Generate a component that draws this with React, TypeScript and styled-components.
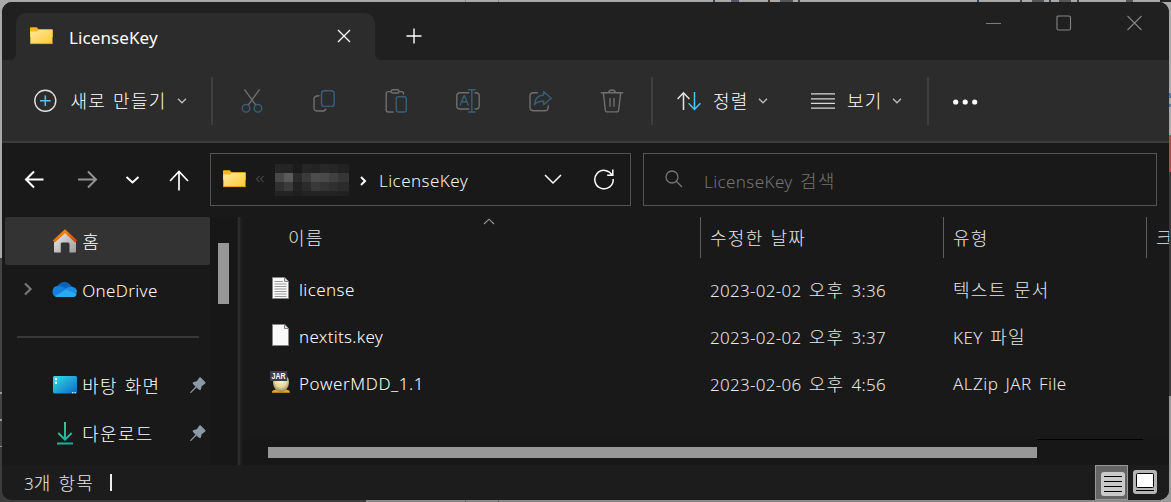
import React from "react";
import styled, { createGlobalStyle } from "styled-components";

const Global = createGlobalStyle`
  * { box-sizing: border-box; }
  body { margin: 0; background: #8a8a8a; overflow: hidden; }
`;

const Desktop = styled.div`
  width: 1171px;
  height: 502px;
  padding: 2px;
  font-family: "Noto Sans", "Noto Sans CJK KR", sans-serif;
  font-size: 17px;
  line-height: 24px;
  color: #fff;
  background:
    linear-gradient(90deg, transparent 75px, #888 75px 76px, transparent 76px 108px, #888 108px 109px, transparent 109px) 390px 0 / 200px 2px no-repeat,
    linear-gradient(90deg, #345 0 2px, transparent 2px 18px, #556 18px 26px, transparent 26px 55px, #432 55px 57px, transparent 57px) 713px 0 / 70px 2px no-repeat,
    linear-gradient(90deg, #555 0 13px, transparent 13px 18px, #345 18px 20px, transparent 20px 197px, #345 197px 199px, transparent 199px 240px, #345 240px 242px, transparent 242px 252px, #555 252px 264px, transparent 264px 269px, #345 269px 271px, transparent 271px 279px, #555 279px 291px, transparent 291px 297px, #345 297px 299px, transparent 299px 346px, #555 346px 353px, transparent 353px 380px, #222 380px 391px) 780px 0 / 391px 2px no-repeat,
    linear-gradient(#a9a9a9, #a9a9a9) 0 0 / 100% 2px no-repeat,
    linear-gradient(#a9a9a9 0 258px, #444 258px 392px, #999 392px 394px, #444 394px 419px, #999 419px 421px, #444 421px 446px, #999 446px 447px, #3c3c3c 447px) 0 0 / 10px 100% no-repeat,
    linear-gradient(#aaa 0 93px, #56789a 93px 98px, #aaa 98px 104px, #56789a 104px 107px, #aaa 107px 135px, #b44a4a 135px 172px, #3a3a3a 172px 396px, #999 396px) 1161px 0 / 10px 100% no-repeat,
    linear-gradient(90deg, #3c3c3c 0 366px, #888 366px 465px, #666 465px 466px, #888 466px 498px, #666 498px 499px, #888 499px) 0 492px / 100% 10px no-repeat;
`;

const Window = styled.div`
  width: 1167px;
  height: 498px;
  border-radius: 10px;
  overflow: hidden;
  background: #191919;
  display: flex;
  flex-direction: column;
`;

const Hangul = styled.span`
  font-family: "Noto Sans CJK KR", sans-serif;
  font-size: 18px;
  font-weight: 300;
  letter-spacing: 1.3px;
`;

const TextLine = styled.span<{ $color?: string; $track?: number; $shift?: number; $weight?: number }>`
  color: ${(p) => p.$color ?? "#fff"};
  font-weight: ${(p) => p.$weight ?? 300};
  letter-spacing: ${(p) => p.$track ?? 0}px;
  word-spacing: 2.4px;
  margin-top: ${(p) => p.$shift ?? 0}px;
  white-space: pre;
  flex: none;
`;

function Label({ text, color, track, shift, weight }: {
  text: string; color?: string; track?: number; shift?: number; weight?: number;
}) {
  return (
    <TextLine $color={color} $track={track} $shift={shift} $weight={weight}>
      {text.split(/([가-힣]+)/).map((part, i) => (i % 2 ? <Hangul key={i}>{part}</Hangul> : part))}
    </TextLine>
  );
}

/* ---------- title bar ---------- */

const TitleBar = styled.div`
  height: 58px;
  flex: none;
  background: #202020;
  display: flex;
  align-items: flex-end;
  padding-left: 14px;
`;

const Tab = styled.div`
  width: 359px;
  height: 47px;
  border-radius: 10px 10px 0 0;
  background: #2c2c2c;
  display: flex;
  align-items: center;
  padding: 0 24px 2px 14px;
  position: relative;
  &::before, &::after {
    content: "";
    position: absolute;
    bottom: 0;
    width: 5px;
    height: 5px;
  }
  &::before { left: -5px; background: radial-gradient(circle at 0 0, transparent 4.5px, #2c2c2c 5px); }
  &::after { right: -5px; background: radial-gradient(circle at 100% 0, transparent 4.5px, #2c2c2c 5px); }
`;

const TabTitle = styled.div`
  flex: 1;
  margin: 5px 0 0 16px;
  display: flex;
`;

const NewTab = styled.div`
  width: 78px;
  height: 48px;
  display: flex;
  align-items: center;
  justify-content: center;
`;

const WindowControls = styled.div`
  margin-left: auto;
  align-self: flex-start;
  display: flex;
  height: 41px;
  align-items: center;
  gap: 55px;
  padding-right: 27px;
`;

/* ---------- command bar ---------- */

const CommandBar = styled.div`
  height: 83px;
  flex: none;
  background: #2c2c2c;
  border-bottom: 2px solid #3b3b3b;
  display: flex;
  align-items: center;
`;

const Command = styled.div<{ $width: number; $pad: number; $gap: number }>`
  width: ${(p) => p.$width}px;
  padding-left: ${(p) => p.$pad}px;
  display: flex;
  align-items: center;
  flex: none;
  gap: ${(p) => p.$gap}px;
`;

const ToolIcons = styled.div`
  display: flex;
  width: 438px;
  padding-left: 27px;
  gap: 48px;
`;

const Separator = styled.div`
  width: 2px;
  height: 48px;
  flex: none;
  background: #3e3e3e;
`;

const ChevronBox = styled.div`
  margin: 1px 0 0 -3px;
  display: flex;
`;

/* ---------- navigation row ---------- */

const NavBar = styled.div`
  height: 74px;
  flex: none;
  display: flex;
  align-items: center;
  padding-bottom: 1px;
`;

const NavButtons = styled.div`
  width: 208px;
  padding: 1px 0 0 22px;
  display: grid;
  grid-template-columns: 54px 44px 47px 20px;
  align-items: center;
`;

const AddressBox = styled.div`
  width: 421px;
  height: 53px;
  border: 1px solid #535353;
  display: flex;
  align-items: center;
  padding: 0 16px 0 12px;
`;

const FolderBox = styled.div`
  display: flex;
  margin-top: -2px;
`;

const Mosaic = styled.div`
  display: grid;
  grid-template-columns: 9px 9px 9px 9px 9px 9px 9px 11px;
  grid-template-rows: 9px 9px 9px 5px;
  margin: 0 10.5px 0 10px;
`;

const MosaicCell = styled.i<{ $shade: string }>`
  background: ${(p) => p.$shade};
`;

const PathEnd = styled.div`
  flex: 1;
  display: flex;
  padding-left: 12.5px;
`;

const SearchBox = styled.div`
  width: 514px;
  height: 53px;
  margin-left: 12px;
  border: 1px solid #535353;
  display: flex;
  align-items: center;
  padding-left: 21px;
  gap: 21px;
`;

/* ---------- body ---------- */

const Body = styled.div`
  height: 248px;
  flex: none;
  display: flex;
`;

const Sidebar = styled.div`
  width: 208px;
  padding-left: 3px;
  flex: none;
`;

const SideItem = styled.div<{ $active?: boolean }>`
  height: 48px;
  background: ${(p) => (p.$active ? "#333" : "transparent")};
  border-radius: 2px;
  display: grid;
  grid-template-columns: 47px 26px 1fr 18px;
  align-items: center;
  padding-right: 2px;
`;

const SideChevron = styled.div`
  padding-left: 17px;
  display: flex;
`;

const SideLabel = styled.div`
  display: flex;
  padding: 1px 0 0 4.2px;
`;

const SideRule = styled.div`
  height: 48px;
  padding: 23px 11px 0 12px;
  &::after {
    content: "";
    display: block;
    height: 2px;
    background: #383838;
  }
`;

const SideScroll = styled.div`
  width: 27px;
  flex: none;
  background: #171717;
  padding: 26px 0 0 8px;
`;

const SideThumb = styled.div`
  width: 11px;
  height: 61px;
  background: #979797;
`;

const Splitter = styled.div`
  width: 5px;
  flex: none;
  border-left: 1px solid #1d1d1d;
  border-right: 2px solid #202020;
  background: #2c2c2c;
`;

const Files = styled.div`
  flex: 1;
  min-width: 0;
  display: flex;
  flex-direction: column;
  overflow: hidden;
`;

const columns = "459px 243px 203px 30px";

const HeaderRow = styled.div`
  height: 49px;
  display: grid;
  grid-template-columns: ${columns};
  flex: none;
`;

const HeaderCell = styled.div<{ $pad?: number }>`
  height: 41px;
  padding: 1px 0 0 ${(p) => p.$pad ?? 9}px;
  border-right: 1px solid #5f5f5f;
  display: flex;
  align-items: center;
  position: relative;
  &:last-child { border-right: none; }
`;

const SortMark = styled.div`
  position: absolute;
  left: 241px;
  top: 1px;
  display: flex;
`;

const FileRow = styled.div`
  height: 47px;
  flex: none;
  display: grid;
  grid-template-columns: ${columns};
  align-items: center;
`;

const FileCell = styled.div<{ $pad?: number }>`
  height: 28px;
  padding-left: ${(p) => p.$pad ?? 9}px;
  display: flex;
  align-items: center;
`;

const FileIcon = styled.div`
  width: 29px;
  display: flex;
  margin-top: -3px;
`;

const HScroll = styled.div`
  margin-top: auto;
  height: 26px;
  flex: none;
  background: #171717;
  display: flex;
  padding-left: 26px;
`;

const HThumb = styled.div`
  margin-top: 8px;
  width: 769px;
  height: 11px;
  background: #979797;
`;

const HRemainder = styled.div`
  width: 106px;
  height: 1px;
  background: #000;
`;

/* ---------- status bar ---------- */

const StatusBar = styled.div`
  height: 35px;
  flex: none;
  background: #1c1c1c;
  display: flex;
  align-items: center;
  padding-left: 22px;
`;

const Caret = styled.div`
  width: 2px;
  height: 17px;
  margin-left: 16px;
  background: #eee;
`;

const ViewToggle = styled.div<{ $active?: boolean }>`
  width: ${(p) => (p.$active ? 33 : 41)}px;
  height: 35px;
  padding: ${(p) => (p.$active ? "6px 0 0 5px" : "5px 0 0 5px")};
  ${(p) => (p.$active ? "margin-left: auto; background: #656565; border: 1px solid #979797;" : "")}
`;

/* ---------- icons ---------- */

function FolderIcon({ id }: { id: string }) {
  return (
    <svg width="23" height="18" viewBox="0 0 23 18">
      <defs>
        <linearGradient id={id} x1="0" y1="0" x2="1" y2="1">
          <stop offset="0" stopColor="#ffe9a0" />
          <stop offset="1" stopColor="#ffc933" />
        </linearGradient>
      </defs>
      <path d="M0 1.2Q0 .3 1 .3H6.6L8.6 2.2H22Q22.7 2.2 22.7 3V10H0Z" fill="#fcb615" />
      <path d="M.3 4.5H7L8.6 2.8H22.5V16.8H.3Z" fill={`url(#${id})`} />
      <path d="M.2 16.6H22.7" stroke="#e8a418" strokeWidth=".9" />
    </svg>
  );
}

function Stroke({ w, h, d, color = "#fff", sw = 1.3 }: {
  w: number; h: number; d: string; color?: string; sw?: number;
}) {
  return (
    <svg width={w} height={h} viewBox={`0 0 ${w} ${h}`} fill="none" stroke={color} strokeWidth={sw}>
      <path d={d} />
    </svg>
  );
}

const GRAY = "#6f6f6f";
const BLUE = "#366079";

function ToolIcon({ gray, blue }: { gray: string; blue: string }) {
  return (
    <svg width="24" height="24" viewBox="0 0 24 24" fill="none" strokeWidth="1.4" strokeLinecap="round" strokeLinejoin="round">
      <path d={gray} stroke={GRAY} />
      <path d={blue} stroke={BLUE} />
    </svg>
  );
}

const tools = [
  {
    gray: "M4.8 .8L15.6 15.8M19.2 .8L8.4 15.8",
    blue: "M9.8 19.3A3.8 3.8 0 1 1 2.2 19.3A3.8 3.8 0 1 1 9.8 19.3M21.8 19.3A3.8 3.8 0 1 1 14.2 19.3A3.8 3.8 0 1 1 21.8 19.3",
  },
  {
    gray: "M7 6.8C3.8 6.8 2 7.5 2 10V18.7C2 20.8 3.2 22 5.4 22H9.5C12 22 13.4 21.6 13.8 20.2",
    blue: "M12.5 1.8H19.2Q22.2 1.8 22.2 4.8V14.4Q22.2 17.4 19.2 17.4H12.5Q9.5 17.4 9.5 14.4V4.8Q9.5 1.8 12.5 1.8Z",
  },
  {
    gray: "M7 2.6H4.2Q2.2 2.6 2.2 4.6V21Q2.2 23 4.2 23H9M8.8 .8H13.4Q15 .8 15 2.4T13.4 4H8.8Q7.2 4 7.2 2.4T8.8 .8ZM15.2 2.6H17.6Q19.6 2.6 19.6 5",
    blue: "M14.2 7.8H20.4Q22.3 7.8 22.3 9.7V21.1Q22.3 23 20.4 23H14.2Q12.3 23 12.3 21.1V9.7Q12.3 7.8 14.2 7.8Z",
  },
  {
    gray: "M12.8 3.7H4Q.8 3.7 .8 6.9V16.8Q.8 20 4 20H12.8M19 3.7H20Q23.2 3.7 23.2 6.9V16.8Q23.2 20 20 20H19",
    blue: "M12.6 .8H19M12.6 23H19M15.8 .8V23M4.2 16L8 6.8H8.5L12.3 16M5.6 12.7H10.9",
  },
  {
    gray: "M9.5 3.7H5.5Q2 3.7 2 6.9V18.6Q2 21.8 5.5 21.8H16.5Q20.2 21.8 20.2 18.2V16.8",
    blue: "M15.6 2.5L23.2 9.2L15.6 15.8V12.2C11 12 8.2 13.2 6.4 15.8C6.8 10 9.8 6.4 15.6 6Z",
  },
  {
    gray: "M1.2 3.8H22.8M8.8 3.5C9 .2 15 .2 15.2 3.5M3.4 4L5.3 20.8Q5.6 22.9 7.6 22.9H16.4Q18.4 22.9 18.7 20.8L20.6 4M10 9.5V17.2M14 9.5V17.2",
    blue: "",
  },
];

const Chevron = () => (
  <ChevronBox>
    <Stroke w={10} h={8} d="M1 1.8L5 5.8L9 1.8" color="#b9b9b9" sw={1.4} />
  </ChevronBox>
);

function HomeIcon() {
  return (
    <svg width="26" height="26" viewBox="0 0 26 26">
      <defs>
        <linearGradient id="wall" x1="0" y1="0" x2="1" y2="1">
          <stop offset="0" stopColor="#ececec" />
          <stop offset="1" stopColor="#9d9d9d" />
        </linearGradient>
        <linearGradient id="roof" x1="0" y1="0" x2="1" y2="1">
          <stop offset="0" stopColor="#fb9a0c" />
          <stop offset="1" stopColor="#d63f05" />
        </linearGradient>
      </defs>
      <path d="M2 12L13 3L24 12V23.5Q24 24.5 23 24.5H17.5V16Q17.5 14.5 16 14.5H10Q8.8 14.5 8.8 16V24.5H3Q2 24.5 2 23.5Z" fill="url(#wall)" />
      <path d="M1.8 13.5L13 3.2L24.2 13.5" fill="none" stroke="url(#roof)" strokeWidth="3" />
    </svg>
  );
}

function CloudIcon() {
  return (
    <svg width="26" height="18" viewBox="0 0 26 18">
      <path d="M5 7C7 1.5 16 -1 20 7L12 13Z" fill="#0a63b8" />
      <path d="M3.8 6.2C7 5 10 6 12.5 8L20 12L5 17C-1 16.8 -.5 7.5 3.8 6.2Z" fill="#1480dc" />
      <path d="M13 9C17 5.5 24.5 5.8 25 11.5L24 14L12 13Z" fill="#1b8fe5" />
      <path d="M3 16L14 9.6L24.7 14C24 16.5 22.5 17 20.5 17H5.5Q4 17 3 16Z" fill="#29a9ee" />
    </svg>
  );
}

function DesktopIcon() {
  return (
    <svg width="26" height="20" viewBox="0 0 26 20">
      <defs>
        <linearGradient id="desk" x1="0" y1="0" x2="1" y2="1">
          <stop offset="0" stopColor="#35dfe8" />
          <stop offset="1" stopColor="#0c68c4" />
        </linearGradient>
      </defs>
      <rect x="1" y="1" width="24" height="17.6" rx="1.5" fill="url(#desk)" />
      <path d="M3 3.2h2v2h-2zM3 6.8h2v2h-2z" fill="#fff" />
      <path d="M20 17h1.3v1.2H20zM22.5 17h1.3v1.2h-1.3z" fill="#dff" />
    </svg>
  );
}

function DownloadIcon() {
  return (
    <svg width="26" height="24" viewBox="0 0 26 24" fill="none" strokeWidth="2">
      <defs>
        <linearGradient id="down" gradientUnits="userSpaceOnUse" x1="5" y1="0" x2="20" y2="24">
          <stop offset="0" stopColor="#3fcf8a" />
          <stop offset="1" stopColor="#10a9a5" />
        </linearGradient>
      </defs>
      <path d="M13 1V18.6M6.3 12L13 18.7L19.7 12M5 22.6H21" stroke="url(#down)" />
    </svg>
  );
}

const PinIcon = () => (
  <svg width="16" height="17" viewBox="0 0 16 17">
    <path d="M9.3 .6Q10.2 0 11 .8L15.2 5Q16 6 15 6.7L11.6 9.2L11 12.2Q10.4 14 9 12.8L6.5 10.4L1 16H.2V15.2L5.5 9.4L3 7Q2 5.6 3.6 5L6.8 4.2Z" fill="#8d98a3" />
  </svg>
);

function PageIcon({ lines }: { lines?: boolean }) {
  return (
    <svg width="20" height="23" viewBox="-2 0 20 23">
      <path d="M.5 .5H12.8L16.5 4.5V21.5H.5Z" fill="#f9f9f9" stroke="#858585" />
      <path d="M12.5 1V4.5H16.5" fill="#ddd" stroke="#777" strokeWidth=".9" />
      {lines && <path d="M2.5 4.5H11M2.5 7H14.5M2.5 9.5H14.5M2.5 12H14.5M2.5 14.5H14.5M2.5 17H14.5M2.5 19.5H14.5" stroke="#9a9a9a" />}
    </svg>
  );
}

function JarIcon() {
  return (
    <svg width="22" height="24" viewBox="0 0 22 24">
      <defs>
        <radialGradient id="egg" cx=".5" cy=".35" r=".65">
          <stop offset="0" stopColor="#fffbe0" />
          <stop offset=".6" stopColor="#e6d49c" />
          <stop offset="1" stopColor="#94804f" />
        </radialGradient>
      </defs>
      <path d="M2 21.5Q3 19.3 7 20H15Q19 19.3 19.8 21.5V22.7H2Z" fill="#e8a51a" />
      <ellipse cx="11" cy="12.5" rx="8" ry="9.5" fill="url(#egg)" />
      <rect x="0" y="1" width="17.2" height="10" fill="#3c3d4b" />
      <text x="8.6" y="9" fontSize="8.5" fontWeight="700" textAnchor="middle" textLength="14" lengthAdjust="spacingAndGlyphs" fill="#fff" fontFamily="Liberation Sans, sans-serif">JAR</text>
    </svg>
  );
}

const mosaic = [
  "#252525", "#242424", "#1b1b1b", "#252525", "#232323", "#282828", "#262626", "#222222",
  "#484848", "#5a5a5a", "#2b2b2b", "#3b3b3b", "#4c4c4c", "#4a4a4a", "#414141", "#363636",
  "#303030", "#3b3b3b", "#222222", "#2b2b2b", "#393939", "#343434", "#303030", "#2b2b2b",
  "#232323", "#232323", "#1f1f1f", "#222222", "#232323", "#232323", "#222222", "#212121",
];

const files = [
  { name: "license", track: 0.4, date: "2023-02-02 오후 3:36", type: "텍스트 문서", icon: <PageIcon lines /> },
  { name: "nextits.key", track: 0.3, date: "2023-02-02 오후 3:37", type: "KEY 파일", icon: <PageIcon /> },
  { name: "PowerMDD_1.1", track: 0.6, date: "2023-02-06 오후 4:56", type: "ALZip JAR File", icon: <JarIcon /> },
];

export default function App() {
  return (
    <Desktop>
      <Global />
      <Window>
        <TitleBar>
          <Tab>
            <FolderIcon id="folderTab" />
            <TabTitle><Label text="LicenseKey" weight={400} track={0.1} /></TabTitle>
            <Stroke w={14} h={14} d="M1 1L13 13M13 1L1 13" />
          </Tab>
          <NewTab><Stroke w={16} h={16} d="M8 .5V15.5M.5 8H15.5" sw={1.4} /></NewTab>
          <WindowControls>
            <Stroke w={17} h={16} d="M2 8.5H17" color="#7c7c7c" sw={1} />
            <Stroke w={16} h={16} d="M3 1H13Q14.5 1 14.5 2.2V13.8Q14.5 15 13 15H2.5Q1 15 1 13.8V2.2Q1 1 2.5 1Z" color="#858585" sw={1.1} />
            <Stroke w={15} h={16} d="M.5 1L14.5 15M14.5 1L.5 15" color="#858585" sw={1.1} />
          </WindowControls>
        </TitleBar>

        <CommandBar>
          <Command $width={209} $pad={31} $gap={13.5}>
            <svg width="24" height="24" viewBox="0 0 24 24" fill="none">
              <circle cx="12.3" cy="11.8" r="10.5" stroke="#e2e2e2" strokeWidth="1.4" />
              <path d="M12.3 6.5V17.1M7 11.8H17.6" stroke="#4cc2ff" strokeWidth="1.5" />
            </svg>
            <Label text="새로 만들기" shift={1} />
            <Chevron />
          </Command>
          <Separator />
          <ToolIcons>{tools.map((t, i) => <ToolIcon key={i} {...t} />)}</ToolIcons>
          <Separator />
          <Command $width={134} $pad={24} $gap={12}>
            <svg width="24" height="20" viewBox="0 0 24 20" fill="none" strokeWidth="1.5">
              <path d="M6.5 19V1.5M.6 8L6.5 1.8L12.4 8" stroke="#e4e4e4" />
              <path d="M17.5 1V18.6M11.6 12.3L17.5 18.4L23.4 12.3" stroke="#4cc2ff" />
            </svg>
            <Label text="정렬" shift={1} />
            <Chevron />
          </Command>
          <Command $width={140} $pad={24} $gap={12}>
            <Stroke w={24} h={18} d="M0 1.8H24M0 6.8H24M0 11.4H24M0 16.2H24" color="#d8d8d8" sw={1.3} />
            <Label text="보기" shift={1} />
            <Chevron />
          </Command>
          <Separator />
          <Command $width={80} $pad={24} $gap={0}>
            <svg width="26" height="8" viewBox="0 -2 26 8" fill="#fff">
              <circle cx="2.7" cy="3" r="2.6" /><circle cx="12.2" cy="3" r="2.6" /><circle cx="21.7" cy="3" r="2.6" />
            </svg>
          </Command>
        </CommandBar>

        <NavBar>
          <NavButtons>
            <Stroke w={20} h={20} d="M19.5 9.5H2M10 1.5L2 9.5L10 17.5" sw={2} />
            <Stroke w={20} h={20} d="M0 9.5H18M10 1.5L18 9.5L10 17.5" color="#929292" sw={2} />
            <Stroke w={20} h={20} d="M4.5 7L10.5 12.5L16.5 7" sw={2} />
            <Stroke w={20} h={22} d="M10 21.5V3M1 12L10 2.5L19 12" sw={1.7} />
          </NavButtons>
          <AddressBox>
            <FolderBox><FolderIcon id="folderPath" /></FolderBox>
            <Stroke w={19} h={10} d="M13.5 1L10.5 4L13.5 7M17.5 1L14.5 4L17.5 7" color="#5c5c5c" sw={1} />
            <Mosaic>{mosaic.map((c, i) => <MosaicCell key={i} $shade={c} />)}</Mosaic>
            <Stroke w={7} h={12} d="M1 3L5 7L1 11" sw={2} />
            <PathEnd><Label text="LicenseKey" color="#f4f4f4" track={0.45} shift={2} /></PathEnd>
            <Stroke w={18} h={12} d="M1 1L9 9L17 1" sw={1.5} />
            <svg width="52" height="24" viewBox="0 0 52 24" fill="none" stroke="#fff" strokeWidth="1.5">
              <path d="M50 7A9.2 9.2 0 1 0 51.2 11M50.8 1.5V7.2H45.2" />
            </svg>
          </AddressBox>
          <SearchBox>
            <Stroke w={18} h={20} d="M13 7A6 6 0 1 1 1 7A6 6 0 1 1 13 7M11.3 11.3L17 17" color="#757575" />
            <Label text="LicenseKey 검색" color="#747474" track={0.4} shift={2} />
          </SearchBox>
        </NavBar>

        <Body>
          <Sidebar>
            <SideItem $active>
              <span />
              <HomeIcon />
              <SideLabel><Label text="홈" /></SideLabel>
            </SideItem>
            <SideItem>
              <SideChevron><Stroke w={12} h={14} d="M3 1.5L8.6 7L3 12.5" color="#777" sw={2.2} /></SideChevron>
              <CloudIcon />
              <SideLabel><Label text="OneDrive" shift={2} track={0.35} /></SideLabel>
            </SideItem>
            <SideRule />
            <SideItem>
              <span />
              <DesktopIcon />
              <SideLabel><Label text="바탕 화면" /></SideLabel>
              <PinIcon />
            </SideItem>
            <SideItem>
              <span />
              <DownloadIcon />
              <SideLabel><Label text="다운로드" /></SideLabel>
              <PinIcon />
            </SideItem>
          </Sidebar>
          <SideScroll><SideThumb /></SideScroll>
          <Splitter />
          <Files>
            <HeaderRow>
              <HeaderCell $pad={46}>
                <Label text="이름" color="#e8e8e8" />
                <SortMark><Stroke w={12} h={7} d="M1 6L6 1.2L11 6" color="#9a9a9a" sw={1.1} /></SortMark>
              </HeaderCell>
              <HeaderCell><Label text="수정한 날짜" color="#e8e8e8" /></HeaderCell>
              <HeaderCell><Label text="유형" color="#e8e8e8" /></HeaderCell>
              <HeaderCell><Label text="크기" color="#e8e8e8" /></HeaderCell>
            </HeaderRow>
            {files.map((f) => (
              <FileRow key={f.name}>
                <FileCell $pad={28}>
                  <FileIcon>{f.icon}</FileIcon>
                  <Label text={f.name} track={f.track} shift={1} />
                </FileCell>
                <FileCell><Label text={f.date} color="#e8e8e8" track={0.3} /></FileCell>
                <FileCell><Label text={f.type} color="#e8e8e8" track={0.45} /></FileCell>
              </FileRow>
            ))}
            <HScroll>
              <HThumb />
              <HRemainder />
            </HScroll>
          </Files>
        </Body>

        <StatusBar>
          <Label text="3개 항목" color="#e8e8e8" shift={1} />
          <Caret />
          <ViewToggle $active>
            <svg width="24" height="24" viewBox="0 0 24 24">
              <rect width="24" height="24" rx="3" fill="#c9c9c9" />
              <path d="M3 4.5H21M3 9.5H21M3 14.5H21M3 19.5H21" stroke="#000" />
            </svg>
          </ViewToggle>
          <ViewToggle>
            <svg width="24" height="24" viewBox="0 0 24 24">
              <rect width="24" height="24" rx="3" fill="#b5b5b5" />
              <rect x="3.5" y="3.5" width="17" height="14" rx="1" fill="#fff" stroke="#000" />
              <path d="M3 20.5H21" stroke="#000" />
            </svg>
          </ViewToggle>
        </StatusBar>
      </Window>
    </Desktop>
  );
}
